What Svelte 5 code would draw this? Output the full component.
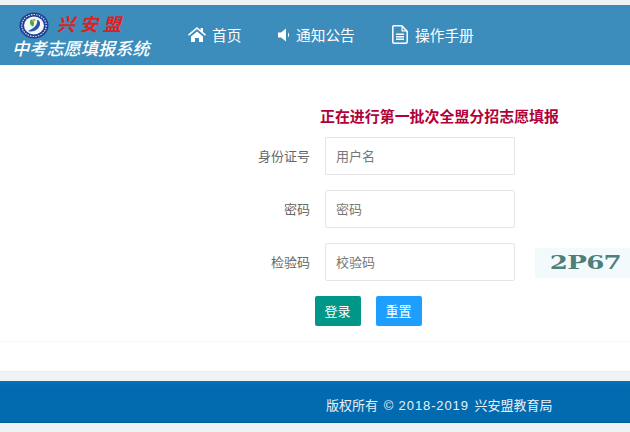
<script>
  const fields = [
    { label: '身份证号', placeholder: '用户名', type: 'text' },
    { label: '密码', placeholder: '密码', type: 'password' },
    { label: '检验码', placeholder: '校验码', type: 'text', captcha: true }
  ];
</script>

<div class="page">
  <header class="header">
    <div class="brand">
      <div class="logo-row">
        <svg class="emblem" width="30" height="27" viewBox="0 0 30 30" preserveAspectRatio="none" aria-hidden="true">
          <circle cx="15" cy="15" r="14.5" fill="#1f3f96" />
          <circle cx="15" cy="15" r="12.200" fill="none" stroke="#dfe7f3" stroke-width="1.200" stroke-dasharray="1.500 1.200" />
          <circle cx="15" cy="15" r="10" fill="#f4f7fa" />
          <path d="M9 21c5 2 11-1 12-7 .5-3-1-5-3-5 1 4-2 9-9 12z" fill="#2a55a8" />
          <path d="M12 8c-2 3-1 7 2 8 2-3 1-6-2-8z" fill="#4aa83c" />
          <circle cx="15" cy="9" r="1.600" fill="#d9a531" />
        </svg>
        <span class="calli">兴安盟</span>
      </div>
      <div class="system">中考志愿填报系统</div>
    </div>
    <nav class="nav">
      <a class="nav-item home" href="#home">
        <svg width="18" height="15" viewBox="0 0 18 15" aria-hidden="true">
          <path fill="#fff" d="M9 0 0 7.600l1 1.100L9 2.100l8 6.600 1-1.100-3-2.500V1h-2.400v2.200zM3 9.400 9 4.400l6 5V15h-4v-4H7v4H3z" />
        </svg>
        <span>首页</span>
      </a>
      <a class="nav-item notice" href="#notice">
        <svg width="13" height="14" viewBox="0 0 13 14" aria-hidden="true">
          <path fill="#fff" d="M0 4.500h3L8 .5v13l-5-4H0zM10 4.600c1.500 1 1.500 3.800 0 4.800z" />
        </svg>
        <span>通知公告</span>
      </a>
      <a class="nav-item manual" href="#manual">
        <svg width="16" height="19" viewBox="0 0 16 19" aria-hidden="true">
          <path fill="none" stroke="#fff" stroke-width="1.500" d="M1.500.8h8.300l5.400 5.400v10.500a1.500 1.500 0 0 1-1.500 1.500H2a1.200 1.200 0 0 1-1.200-1.200V1.500z" />
          <path fill="#fff" d="M9.500 1h1.200v4.300h4.300v1.200H9.500zM4 8.500h8V10H4zM4 11h8v1.500H4zM4 13.500h8V15H4z" />
        </svg>
        <span>操作手册</span>
      </a>
    </nav>
  </header>

  <main class="main">
    <h1 class="title">正在进行第一批次全盟分招志愿填报</h1>
    <form class="form">
      {#each fields as f}
        <div class="row">
          <label class="label" for={f.placeholder}>{f.label}</label>
          <input class="input" id={f.placeholder} type={f.type} placeholder={f.placeholder} />
          {#if f.captcha}
            <div class="captcha"><span>2P67</span></div>
          {/if}
        </div>
      {/each}
      <div class="actions">
        <button class="btn login" type="button">登录</button>
        <button class="btn reset" type="button">重置</button>
      </div>
    </form>
    <div class="spacer"></div>
  </main>

  <footer class="footer">版权所有 <span class="years">© 2018-2019</span> 兴安盟教育局</footer>
</div>

<style>
  :global(body) {
    margin: 0;
    background: #eff3f6;
  }
  .page {
    width: 630px;
    height: 432px;
    overflow: hidden;
    display: flex;
    flex-direction: column;
    padding-top: 5px;
    box-sizing: border-box;
    font-family: "Liberation Sans", "Noto Sans CJK SC", sans-serif;
  }
  .header {
    height: 60px;
    flex: none;
    background: #3c8dbc;
    display: flex;
    color: #fff;
  }
  .brand {
    width: 188px;
    flex: none;
    padding: 5px 0 0 14px;
    box-sizing: border-box;
  }
  .logo-row {
    display: flex;
    align-items: center;
    height: 30px;
    padding-left: 5px;
  }
  .emblem {
    flex: none;
  }
  .calli {
    margin-left: 8px;
    font-size: 18px;
    font-weight: 700;
    font-style: italic;
    letter-spacing: 5px;
    color: #e0201c;
    line-height: 30px;
  }
  .system {
    margin-top: -2px;
    margin-left: -2px;
    font-size: 17.200px;
    line-height: 23px;
    font-style: italic;
    font-weight: 500;
    white-space: nowrap;
  }
  .nav {
    display: flex;
    align-items: center;
    height: 59px;
  }
  .nav-item {
    display: flex;
    align-items: center;
    color: #fff;
    text-decoration: none;
    font-size: 14.700px;
    white-space: nowrap;
  }
  .home { gap: 6px; width: 89px; }
  .notice { gap: 5px; width: 115px; padding-left: 1px; box-sizing: border-box; }
  .manual { gap: 7px; }
  .main {
    flex: none;
    height: 307px;
    background: #fff;
    box-sizing: border-box;
    display: flex;
    flex-direction: column;
    border-bottom: 1px solid #f3e9e4;
  }
  .title {
    margin: 43px 0 0 320px;
    font-size: 14.950px;
    line-height: 18px;
    font-weight: 700;
    color: #b00238;
    white-space: nowrap;
  }
  .form {
    margin-top: 11px;
    display: flex;
    flex-direction: column;
    gap: 15px;
  }
  .row {
    display: flex;
    align-items: center;
    height: 38px;
  }
  .label {
    width: 310px;
    box-sizing: border-box;
    text-align: right;
    flex: none;
    font-size: 13px;
    line-height: 39px;
    height: 38px;
    color: #666;
  }
  .input {
    margin-left: 15px;
    width: 190px;
    height: 38px;
    flex: none;
    box-sizing: border-box;
    border: 1px solid #e6e6e6;
    border-radius: 2px;
    padding: 0 10px;
    font: inherit;
    font-size: 13px;
    outline: none;
    background: #fff;
  }
  .input::placeholder {
    color: #777;
    opacity: 1;
  }
  .captcha {
    margin-left: 20px;
    width: 95px;
    height: 30px;
    flex: none;
    background: #f3fafc;
    display: flex;
    align-items: center;
    justify-content: center;
    transform: translateY(1px);
  }
  .captcha span {
    font-family: "DejaVu Serif", "Liberation Serif", serif;
    font-weight: 700;
    font-size: 18px;
    letter-spacing: -.5px;
    color: #4f7f7a;
    transform: scaleX(1.450);
    padding-bottom: 2px;
    padding-left: 4px;
  }
  .actions {
    display: flex;
    gap: 15px;
    padding-left: 315px;
  }
  .btn {
    width: 46px;
    height: 30px;
    border: 0;
    border-radius: 2px;
    padding: 0 1px 1px 0;
    color: #fff;
    font: inherit;
    font-size: 13px;
  }
  .login { background: #009688; }
  .reset { background: #1e9fff; }
  .spacer {
    margin-top: 15px;
    height: 30px;
    border-top: 1px solid #f7f7f7;
    flex: none;
  }
  .footer {
    margin-top: 9px;
    height: 42px;
    flex: none;
    box-sizing: border-box;
    padding: 10px 0 0 326px;
    background: linear-gradient(#0272bd 0, #026aaf 6px, #026aaf 100%);
    border-bottom: 1px solid #045d96;
    color: #e8f1f8;
    font-size: 13px;
    line-height: 29px;
    white-space: nowrap;
  }
  .years {
    letter-spacing: .9px;
    margin: 0 2px 0 2px;
  }
</style>
